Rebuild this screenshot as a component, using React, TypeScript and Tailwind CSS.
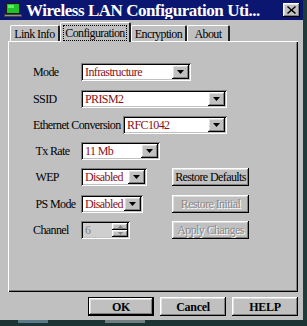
import React from "react";

const serif = "font-['Liberation_Serif',serif]";
const raised =
  "shadow-[inset_-1px_-1px_0_#000,inset_1px_1px_0_#fff,inset_-2px_-2px_0_#808080,inset_2px_2px_0_#dfdfdf]";
const sunken =
  "shadow-[inset_1px_1px_0_#808080,inset_-1px_-1px_0_#fff,inset_2px_2px_0_#000,inset_-2px_-2px_0_#c0c0c0]";

function Arrow() {
  return (
    <svg width="7" height="4" viewBox="0 0 7 4">
      <path d="M0 0H7L3.5 4Z" fill="#000" />
    </svg>
  );
}

function Select({ w, value }: { w: string; value: string }) {
  return (
    <div className={`${w} h-[18px] bg-white ${sunken} flex items-center pl-[4px] pr-[2px] shrink-0`}>
      <span className="flex-1 text-[12px] tracking-[-0.6px] text-[#8a1020] leading-none whitespace-nowrap overflow-hidden">
        {value}
      </span>
      <div className={`w-[17px] h-[14px] bg-[#c0c0c0] ${raised} flex items-center justify-center`}>
        <Arrow />
      </div>
    </div>
  );
}

function Label({ children, w }: { children: React.ReactNode; w: string }) {
  return (
    <span className={`${w} text-[12px] tracking-[-0.6px] text-black leading-none whitespace-nowrap shrink-0`}>
      {children}
    </span>
  );
}

function SideButton({ children, disabled }: { children: React.ReactNode; disabled?: boolean }) {
  return (
    <div
      className={`w-[77px] h-[18px] bg-[#c0c0c0] ${raised} flex items-center justify-center text-[12px] tracking-[-0.6px] leading-none whitespace-nowrap ${
        disabled ? "text-[#8a8a8a] [text-shadow:1px_1px_0_#fff]" : "text-black"
      }`}
    >
      {children}
    </div>
  );
}

function Tab({ label, w, selected }: { label: string; w: string; selected?: boolean }) {
  return (
    <div
      className={`${w} ${
        selected ? "h-[20px] mb-[-1px] z-10" : "h-[16px]"
      } relative bg-[#c0c0c0] border-t border-l border-white border-r-2 border-r-[#202020] rounded-t-[2px] flex items-center justify-center text-[12px] tracking-[-0.6px] leading-none text-black`}
    >
      {selected ? (
        <span className="outline outline-1 outline-dotted outline-black px-[1px] py-[1px]">{label}</span>
      ) : (
        <span>{label}</span>
      )}
    </div>
  );
}

function BottomButton({ children, def }: { children: React.ReactNode; def?: boolean }) {
  return (
    <div className={`w-[66px] h-[19px] ${def ? "border border-black" : ""} bg-[#c0c0c0]`}>
      <div
        className={`w-full h-full ${raised} flex items-center justify-center text-[12px] font-bold tracking-[-0.3px] leading-none text-black`}
      >
        {children}
      </div>
    </div>
  );
}

export default function App() {
  return (
    <div className={`w-[307px] h-[326px] bg-[#c0c0c0] flex flex-col overflow-hidden ${serif}`}>
      <div className="flex flex-1">
        <div className="w-[303px] flex flex-col">
          {/* Title bar */}
          <div className="h-[20px] bg-[#0b1670] flex items-center shrink-0">
            <svg width="19" height="15" viewBox="0 0 19 15" className="ml-[4px] shrink-0">
              <rect x="2" y="0" width="14" height="11" fill="#1a1a1a" />
              <rect x="3" y="1" width="12" height="9" fill="#22c02a" />
              <rect x="4" y="2" width="6" height="3" fill="#5cf060" />
              <rect x="0" y="11" width="18" height="3" fill="#404040" />
              <rect x="1" y="12" width="16" height="1" fill="#909090" />
            </svg>
            <span className="ml-[3px] text-[17px] font-bold tracking-[-0.45px] text-white leading-none whitespace-nowrap overflow-hidden">
              Wireless LAN Configuration Uti...
            </span>
            <div
              className={`ml-auto mr-[3px] shrink-0 w-[17px] h-[14px] bg-[#c0c0c0] ${raised} flex items-center justify-center`}
            >
              <svg width="9" height="8" viewBox="0 0 9 8">
                <path d="M1 0L4.5 3.2L8 0L9 1L5.6 4L9 7L8 8L4.5 4.9L1 8L0 7L3.4 4L0 1Z" fill="#000" />
              </svg>
            </div>
          </div>

          {/* Tabs */}
          <div className="h-[21px] flex items-end pl-[10px] shrink-0">
            <Tab label="Link Info" w="w-[50px]" />
            <Tab label="Configuration" w="w-[71px]" selected />
            <Tab label="Encryption" w="w-[56px]" />
            <Tab label="About" w="w-[43px]" />
          </div>

          {/* Panel */}
          <div className="ml-[8px] w-[290px] h-[251px] shrink-0 bg-[#c0c0c0] shadow-[inset_1px_1px_0_#fff,inset_-1px_-1px_0_#000,inset_-2px_-2px_0_#808080] pt-[22px] pl-[25px] flex flex-col gap-[8px]">
            <div className="h-[18px] flex items-center">
              <Label w="w-[48px]">Mode</Label>
              <Select w="w-[110px]" value="Infrastructure" />
            </div>
            <div className="h-[18px] flex items-center mt-[1px]">
              <Label w="w-[48px]">SSID</Label>
              <Select w="w-[146px]" value="PRISM2" />
            </div>
            <div className="h-[18px] flex items-center">
              <Label w="w-[90px]">Ethernet Conversion</Label>
              <Select w="w-[104px]" value="RFC1042" />
            </div>
            <div className="h-[18px] flex items-center">
              <Label w="w-[48px]">&nbsp;Tx Rate</Label>
              <Select w="w-[79px]" value="11 Mb" />
            </div>
            <div className="h-[18px] flex items-center">
              <div className="w-[139px] flex items-center">
                <Label w="w-[48px]">&nbsp;WEP</Label>
                <Select w="w-[66px]" value="Disabled" />
              </div>
              <SideButton>Restore Defaults</SideButton>
            </div>
            <div className="h-[18px] flex items-center mt-[1px]">
              <div className="w-[139px] flex items-center">
                <Label w="w-[48px]">&nbsp;PS Mode</Label>
                <Select w="w-[62px]" value="Disabled" />
              </div>
              <SideButton disabled>Restore Initial</SideButton>
            </div>
            <div className="h-[18px] flex items-center">
              <div className="w-[139px] flex items-center">
                <Label w="w-[48px]">Channel</Label>
                <div className={`w-[49px] h-[18px] bg-[#cfcfcf] ${sunken} flex items-center pl-[4px] pr-[2px]`}>
                  <span className="flex-1 text-[12px] text-[#808080] leading-none">6</span>
                  <div className="w-[16px] h-[14px] flex flex-col">
                    <div className={`h-[7px] bg-[#c0c0c0] ${raised} flex items-center justify-center`}>
                      <svg width="5" height="3" viewBox="0 0 5 3">
                        <path d="M0 3H5L2.5 0Z" fill="#808080" />
                      </svg>
                    </div>
                    <div className={`h-[7px] bg-[#c0c0c0] ${raised} flex items-center justify-center`}>
                      <svg width="5" height="3" viewBox="0 0 5 3">
                        <path d="M0 0H5L2.5 3Z" fill="#808080" />
                      </svg>
                    </div>
                  </div>
                </div>
              </div>
              <SideButton disabled>Apply Changes</SideButton>
            </div>
          </div>

          {/* Bottom buttons */}
          <div className="mt-[5px] pl-[88px] flex gap-[6px] shrink-0">
            <BottomButton def>OK</BottomButton>
            <BottomButton>Cancel</BottomButton>
            <BottomButton>HELP</BottomButton>
          </div>
        </div>
        <div className="w-[4px] bg-[#1f3b3b]" />
      </div>
      <div className="h-[6px] bg-[#1c3434] shrink-0 flex items-start">
        <div className="ml-[18px] w-[30px] h-[3px] bg-[#5a7a8a]" />
        <div className="ml-[57px] w-[40px] h-[3px] bg-[#708080]" />
      </div>
    </div>
  );
}
